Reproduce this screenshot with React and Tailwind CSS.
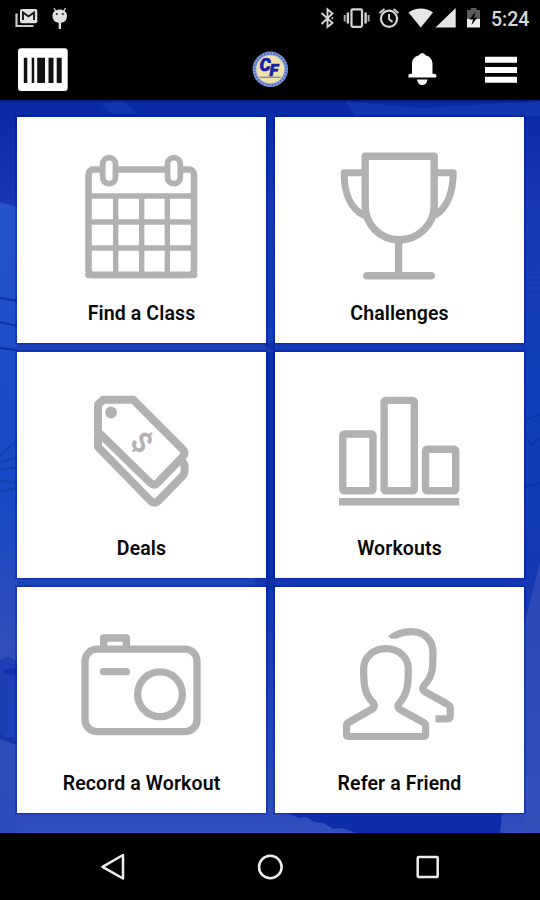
import React from "react";

const line = { fill: "none", stroke: "#b1b1b1", strokeLinejoin: "round" };

function CalendarIcon() {
  return (
    <svg viewBox="17 117 249 171" className="h-[171px] w-[249px]" {...line}>
      <rect x="88.5" y="169.5" width="105.5" height="105.5" rx="5" strokeWidth="6.6" />
      <path d="M88 196H194M88 222H194M88 248H194M115.7 196V275M141.7 196V275M167.3 196V275" strokeWidth="5.4" />
      <path d="M88.5 273v2H194v-2" strokeWidth="6.6" />
      <rect x="102.7" y="157.7" width="12.8" height="26" rx="6.4" fill="#fff" strokeWidth="5.8" />
      <rect x="167.5" y="157.7" width="12.8" height="26" rx="6.4" fill="#fff" strokeWidth="5.8" />
    </svg>
  );
}

function TrophyIcon() {
  return (
    <svg viewBox="275 117 249 171" className="h-[171px] w-[249px]" strokeWidth="7.4" {...line}>
      <path d="M365.2 156.3H434.2V206C434.2 224 419 239.8 399.2 239.8S365.2 224 365.2 206Z" />
      <path d="M365 172.8H344.2C344 193 350.5 209 364.5 215.5M434.5 172.8H453.3C453 193 447 208 434.8 215.5" strokeWidth="7" />
      <path d="M398.6 240V275.7M366.8 275.7H431.3" strokeLinecap="round" />
    </svg>
  );
}

function TagIcon() {
  return (
    <svg viewBox="17 352 249 171" className="h-[171px] w-[249px]" strokeWidth="8" {...line}>
      <path d="M98 434V447L150.5 500.8Q154.500 504.500 158.500 500.800L182 476.500Q184.600 474 184.600 470.500V466Q184 461 179 463" />
      <path d="M98 404.500L103 399.800H133.400L182.800 449.300Q186 452.500 183 456.500L158 482.500Q154.300 486.400 150 482.500L98 431.800Z" fill="#fff" />
      <circle cx="111" cy="412.500" r="5.900" fill="#b1b1b1" stroke="none" />
      <text
        transform="translate(141.8 442.300) rotate(45)"
        y="10"
        textAnchor="middle"
        fontSize="29"
        fontWeight="700"
        fill="#b1b1b1"
        stroke="none"
      >
        $
      </text>
    </svg>
  );
}

function BarsIcon() {
  return (
    <svg viewBox="275 352 249 171" className="h-[171px] w-[249px]" strokeWidth="7.4" {...line}>
      <rect x="342.8" y="434" width="30.2" height="56.700" rx="1.5" />
      <rect x="384.1" y="400.4" width="30.2" height="90.300" rx="1.5" />
      <rect x="425.5" y="449.2" width="30.2" height="41.5" rx="1.5" />
      <path d="M339 501.700H459.300" />
    </svg>
  );
}

function CameraIcon() {
  return (
    <svg viewBox="17 587 249 171" className="h-[171px] w-[249px]" strokeWidth="7.3" {...line}>
      <rect x="85" y="649.2" width="112" height="82.5" rx="12" />
      <path d="M103.700 648V638H126.400V648M103.500 671.700H126.500" strokeLinecap="round" />
      <circle cx="160" cy="694.300" r="22.4" />
    </svg>
  );
}

function FriendsIcon() {
  return (
    <svg viewBox="275 587 249 171" className="h-[171px] w-[249px]" strokeWidth="7.2" {...line}>
      <path d="M390.500 638.800C397 633.500 403 631.600 411 631.600C423 631.600 433 639 433 652C433 668 433 676 424 685.500Q421.500 689 424.500 691.500L448 704.500Q450.200 705.800 450.200 708V716Q450.200 718.800 447.500 718.800H435.500" />
      <path d="M380 638.700H398V643.500H380Z" fill="#fff" stroke="none" />
      <path d="M386 648.700C373 648.700 363.600 657.500 363.600 669C363.600 685 364.500 694 373 702.500Q375.500 705.500 373 708.500L348.500 722.500Q346.500 723.500 346.500 726V734.500Q346.500 736.500 348.500 736.500H423.500Q425.600 736.500 425.600 734.500V726Q425.600 723.500 423.500 722.500L400 709.500Q396.500 706.500 399 703.500C407.500 694 408.300 685 408.300 669C408.300 657.500 399 648.700 386 648.700Z" />
    </svg>
  );
}

const tiles = [
  { label: "Find a Class", Icon: CalendarIcon },
  { label: "Challenges", Icon: TrophyIcon },
  { label: "Deals", Icon: TagIcon },
  { label: "Workouts", Icon: BarsIcon },
  { label: "Record a Workout", Icon: CameraIcon },
  { label: "Refer a Friend", Icon: FriendsIcon },
];

function StatusBar() {
  return (
    <div className="flex h-9 items-center justify-between pr-[11px]">
      <svg viewBox="0 0 80 36" className="h-9 w-20">
        <path d="M16.500 13.500V26H33.500" fill="none" stroke="#ccc" strokeWidth="2.2" />
        <rect x="20" y="9" width="17.300" height="14.300" rx="2" fill="#e2e2e2" />
        <path d="M23 20V12.500L28.500 16.500L34 12.500V20" fill="none" stroke="#111" strokeWidth="1.8" />
        <path d="M52.500 15.800C52.500 7.500 67 7.500 67 15.800C67 20.500 64 22.500 61 22.800V29H58.700V22.800C55.500 22.500 52.500 20.500 52.500 15.800Z" fill="#e2e2e2" />
        <path d="M56 11.500L54 8M63.500 11.500L65.500 8" stroke="#e2e2e2" strokeWidth="1.2" />
        <circle cx="56.700" cy="14" r="1" fill="#222" />
        <circle cx="62.800" cy="14" r="1" fill="#222" />
      </svg>
      <div className="flex items-center">
        <svg viewBox="316 0 175 36" className="h-9 w-[175px]" fill="none" stroke="#d4d4d4">
          <path d="M321.500 13L332.500 23L327.500 27V9.300L332.500 13.500L321.500 24" strokeWidth="1.9" />
          <path d="M331.500 18.200h1.800" strokeWidth="1.8" />
          <rect x="351.500" y="9.300" width="10.500" height="17.500" rx="1.300" strokeWidth="2.2" />
          <path d="M347.900 12.500V23.500M365.600 12.500V23.500" strokeWidth="2.4" />
          <path d="M344.700 15V21.500M368.600 15V21.500" strokeWidth="2" stroke="#aaa" />
          <circle cx="389" cy="18.700" r="8.100" strokeWidth="2.2" />
          <path d="M389 14V19L392.500 22M379.500 13L384.500 9M398.500 13L393.500 9" strokeWidth="1.9" />
          <path d="M408.500 12.500C415.500 7 426 7 433 12.500L420.800 27.500Z" fill="#e6e6e6" stroke="none" />
          <path d="M435.500 27.500L455.700 8V27.500Z" fill="#e6e6e6" stroke="none" />
          <path d="M467 10H470.500V8H476.500V10H480V19H467Z" fill="#5b5b5b" stroke="none" />
          <path d="M467 19H480V27.500H467Z" fill="#eee" stroke="none" />
          <path d="M475.500 11.500L469.500 19.500H473L471.500 25L477.500 17.500H474Z" fill="#050505" stroke="none" />
        </svg>
        <span className="w-[38px] whitespace-nowrap pt-[3px] text-[19.500px] leading-none font-medium text-[#d8d8d8]">5:24</span>
      </div>
    </div>
  );
}

function Toolbar() {
  return (
    <div className="flex h-16 items-center justify-between">
      <svg viewBox="0 36 90 64" className="h-16 w-[90px]">
        <rect x="18" y="48.300" width="49.700" height="42.700" rx="3" fill="#fff" />
        <path d="M23.800 57.700h3.500V83h-3.500zM31.700 57.700h2.500V83h-2.500zM37.200 57.700h7.800V83h-7.800zM48.500 57.700h5V83h-5zM56.700 57.700h5V83h-5z" fill="#111" />
      </svg>
      <svg viewBox="250 36 40 64" className="ml-[50px] h-16 w-10">
        <circle cx="270.300" cy="69.300" r="17.700" fill="#86a0dc" />
        <circle cx="270.300" cy="69.300" r="15.900" fill="none" stroke="#4a6cc4" strokeWidth="2" strokeDasharray="1.700 1.400" />
        <circle cx="270.300" cy="69.300" r="14" fill="#efe1a8" />
        <path d="M260 77.300H280.500" stroke="#7c8fb5" strokeWidth="1.400" />
        <g fontWeight="900" fontStyle="italic" fill="#1420a6" stroke="#1420a6" strokeWidth=".6">
          <text x="259.500" y="71.300" fontSize="17.500">C</text>
          <text x="269.500" y="76" fontSize="16.500">F</text>
        </g>
      </svg>
      <svg viewBox="400 36 140 64" className="h-16 w-[140px]" fill="#fff">
        <path d="M408.500 77.500V74.500L412 73.500V64C412 59.500 414.500 56.500 418.500 55.500Q420.300 53 422.300 53T426 55.500C430 56.500 432.500 59.500 432.500 64V73.500L436.300 74.500V77.500ZM417 79.500H427.500Q426.500 85 422.200 85T417 79.500Z" />
        <path d="M485 56.800h32v6h-32zM485 67h32v6h-32zM485 76.800h32v6h-32z" />
      </svg>
    </div>
  );
}

function Backdrop() {
  return (
    <svg viewBox="0 100 540 733" className="absolute inset-0 h-full w-full" preserveAspectRatio="none">
      <defs>
        <linearGradient id="wall" x1="0" y1="0" x2="0" y2="1">
          <stop offset="0" stopColor="#0729a2" />
          <stop offset=".15" stopColor="#1739b5" />
          <stop offset=".4" stopColor="#103eba" />
          <stop offset=".68" stopColor="#1438b0" />
          <stop offset="1" stopColor="#304fbd" />
        </linearGradient>
        <linearGradient id="side" x1="0" y1="0" x2="0" y2="1">
          <stop offset="0" stopColor="#2853ce" />
          <stop offset=".45" stopColor="#1747c4" />
          <stop offset=".7" stopColor="#304fba" />
          <stop offset="1" stopColor="#2c4cbb" />
        </linearGradient>
      </defs>
      <path d="M0 100H540V833H0Z" fill="url(#wall)" />
      <path d="M0 202L17 207V833H0Z" fill="url(#side)" />
      <path d="M0 100H540V102H0Z" fill="#031f87" />
      <path d="M100 103L123 101L138 114H112ZM345 101L420 108L540 101V116H355Z" fill="#214dbd" opacity=".35" />
      <path d="M0 298L17 301M0 322L17 326M0 348L17 350" stroke="#0828a0" strokeWidth="2" opacity=".8" />
      <path d="M0 455L18 440M0 462L20 456M0 469L18 468M0 480L17 483M0 492L17 488" fill="none" stroke="#143397" strokeWidth="2" opacity=".5" />
      <path d="M0 660L8 656L17 661V740L0 736Z" fill="#0d35af" opacity=".55" />
      <path d="M4 670L17 668V676L5 673ZM0 734L6 738L12 737L17 742V745L0 739Z" fill="#1026a2" opacity=".7" />
      <path d="M524 277H540M524 283H540M524 289H540M524 295H540M524 301H540M524 307H540M524 313H540" stroke="#284ca6" opacity=".55" />
      <path d="M525 420L540 414M526 438L531 445L540 438M524 487L540 483" fill="none" stroke="#0828a0" strokeWidth="2" opacity=".4" />
      <path d="M540 562L524 625V833H540Z" fill="#3450b9" opacity=".7" />
      <path d="M265 343H275V590H265Z" fill="#0a2fa8" />
      <path d="M17 343H260L275 352H17ZM17 578H255V587H17Z" fill="#2449bb" opacity=".6" />
      <path d="M286 812L299 818L307 817L314 822L324 823L333 829L342 828L356 833H500L502 812Z" fill="#0c2eac" />
      <path d="M16.500 116.500H266.500V343H16.500ZM274.500 116.500H524.500V343H274.500ZM16.500 351.500H266.500V577.500H16.500ZM274.500 351.500H524.500V577.500H274.500ZM16.500 586.500H266.500V813H16.500ZM274.500 586.500H524.500V813H274.500Z" fill="none" stroke="#000aa5" strokeWidth="3" opacity=".3" />
    </svg>
  );
}

export default function App() {
  return (
    <div className="flex h-[900px] w-[540px] flex-col overflow-hidden bg-black font-['Roboto','Liberation_Sans',sans-serif]">
      <header className="h-[100px]">
        <StatusBar />
        <Toolbar />
      </header>
      <main className="relative h-[733px]">
        <Backdrop />
        <div className="relative grid grid-cols-[249px_249px] gap-x-[9px] gap-y-[9.5px] pt-[17px] pl-[17px]">
          {tiles.map(({ label, Icon }) => (
            <button key={label} className="flex h-[225.5px] flex-col items-center bg-white">
              <Icon />
              <span className="mt-[13px] text-[19.5px] leading-[26px] font-semibold tracking-[0.12px] whitespace-nowrap text-[#080808]">{label}</span>
            </button>
          ))}
        </div>
      </main>
      <nav className="h-[67px]">
        <svg viewBox="0 833 540 67" className="h-[67px] w-[540px]" fill="none" stroke="#eee" strokeWidth="2.5" strokeLinejoin="round">
          <path d="M102.500 866.800L123 855V878.500Z" />
          <circle cx="270.300" cy="867" r="11.300" />
          <rect x="417.700" y="857" width="20" height="20" rx="1" />
        </svg>
      </nav>
    </div>
  );
}
